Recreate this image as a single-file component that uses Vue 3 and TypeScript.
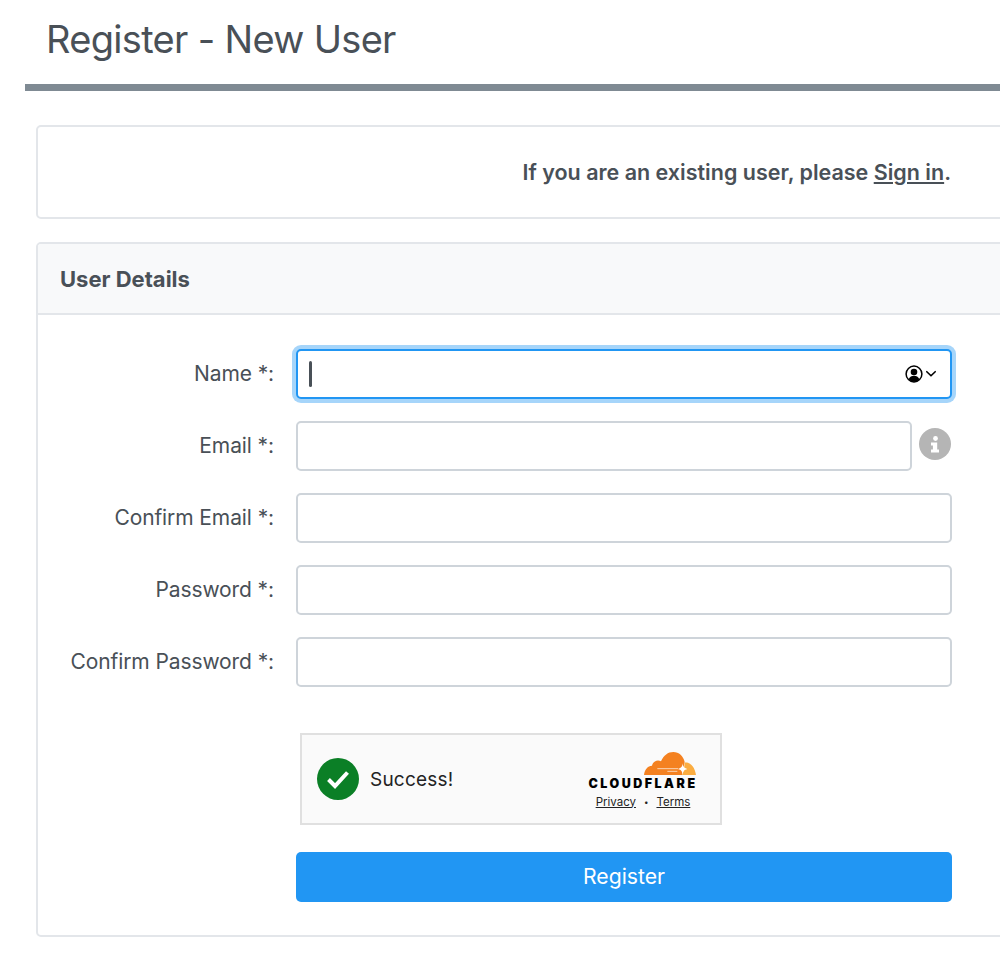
<template>
  <div class="page">
    <header class="page-header">
      <h1>Register - New User</h1>
    </header>

    <section class="card notice">
      <p>If you are an existing user, please <a href="#">Sign in</a>.</p>
    </section>

    <section class="card details">
      <div class="card-header">User Details</div>
      <form class="card-body" @submit.prevent>
        <div v-for="field in fields" :key="field.id" class="form-row">
          <label :for="field.id">{{ field.label }}</label>
          <div class="input-wrap" :class="{ focused: field.focused }">
            <div class="input-box">
              <span v-if="field.focused" class="caret"></span>
              <span v-if="field.focused" class="autofill">
                <svg width="20" height="20" viewBox="0 0 20 20">
                  <circle cx="10" cy="10" r="7.9" fill="none" stroke="#000" stroke-width="1.5" />
                  <circle cx="10" cy="8" r="3.3" fill="#000" />
                  <path d="M4.6 15.200c1-2.500 3.100-3.500 5.400-3.500s4.400 1 5.400 3.500c-1.400 1.600-3.300 2.500-5.400 2.500s-4-.9-5.400-2.500z" fill="#000" />
                </svg>
                <svg width="12" height="8" viewBox="0 0 12 8">
                  <path d="M1.800 1.700 6 5.800l4.200-4.100" fill="none" stroke="#000" stroke-width="1.600" stroke-linecap="round" stroke-linejoin="round" />
                </svg>
              </span>
            </div>
            <span v-if="field.info" class="info-icon">
              <svg width="14" height="20" viewBox="0 0 14 20">
                <circle cx="7.500" cy="4.500" r="2.400" fill="#fff" />
                <path d="M3 8.500h6.200v7H11v3H3v-3h1.900v-4H3z" fill="#fff" />
              </svg>
            </span>
          </div>
        </div>

        <div class="captcha-row">
          <div class="captcha">
            <span class="captcha-check">
              <svg width="42" height="42" viewBox="0 0 42 42">
                <circle cx="21" cy="21" r="21" fill="#0b7f26" />
                <path d="M11.500 21.500l6.500 6.500L30.500 14.500" fill="none" stroke="#fff" stroke-width="4" />
              </svg>
            </span>
            <span class="captcha-text">Success!</span>
            <div class="captcha-brand">
              <svg class="cloud" width="52" height="23" viewBox="0 0 156 69">
                <path d="M0 69C2 52 11 42 24 41 27 28 40 22 51 28 59 10 72 0 88 0c17 0 30 12 34 30l-8 39z" fill="#f48120" />
                <path d="M122 32c19-2 31 16 34 37h-42c5-11 7-24 8-37z" fill="#fbad41" />
                <path d="M40 50h62M70 58h30" stroke="#fff" stroke-width="2" fill="none" />
                <path d="M116 34c1 10 4 14 14 17-10 3-13 7-14 17-1-10-4-14-14-17 10-3 13-7 14-17z" fill="#fff" />
              </svg>
              <div class="wordmark">CLOUDFLARE</div>
              <div class="captcha-links"><a href="#">Privacy</a><span>•</span><a href="#">Terms</a></div>
            </div>
          </div>
        </div>

        <div class="submit-row">
          <button type="submit">Register</button>
        </div>
      </form>
    </section>
  </div>
</template>

<script setup lang="ts">
interface Field {
  id: string;
  label: string;
  focused?: boolean;
  info?: boolean;
}

const fields: Field[] = [
  { id: 'name', label: 'Name *:', focused: true },
  { id: 'email', label: 'Email *:', info: true },
  { id: 'confirm-email', label: 'Confirm Email *:' },
  { id: 'password', label: 'Password *:' },
  { id: 'confirm-password', label: 'Confirm Password *:' },
];
</script>

<style>
html,
body {
  background: #fff;
  overflow: hidden;
}
</style>

<style scoped>
.page {
  width: 1000px;
  height: 960px;
  overflow: hidden;
  box-sizing: border-box;
  padding-left: 25px;
  font-family: Inter, "Liberation Sans", sans-serif;
  color: #495057;
}

.page-header {
  height: 84px;
  border-bottom: 7px solid #7f8a93;
  padding-left: 21px;
  box-sizing: content-box;
}

.page-header h1 {
  margin: 0;
  padding-top: 15px;
  font-size: 38px;
  line-height: 48px;
  font-weight: 400;
  letter-spacing: -0.68px;
}

.card {
  margin-left: 11px;
  width: 1000px;
  box-sizing: border-box;
  border: 2px solid #e3e6ea;
  border-radius: 5px;
  background: #fff;
}

.notice {
  margin-top: 34px;
  height: 94px;
  padding-right: 83px;
  display: flex;
  align-items: center;
  justify-content: flex-end;
  font-size: 21.500px;
  font-weight: 600;
}

.notice p {
  margin: 0;
}

.notice a {
  color: inherit;
}

.details {
  margin-top: 23px;
  height: 695px;
}

.card-header {
  height: 71px;
  box-sizing: border-box;
  padding-left: 22px;
  display: flex;
  align-items: center;
  background: #f8f9fa;
  border-bottom: 2px solid #e3e6ea;
  border-radius: 3px 3px 0 0;
  font-size: 22px;
  font-weight: 700;
}

.card-body {
  padding-top: 34px;
}

.form-row {
  display: flex;
  align-items: center;
  height: 50px;
  margin-bottom: 22px;
}

.form-row label {
  width: 236px;
  flex: none;
  margin-bottom: 2px;
  text-align: right;
  font-size: 21px;
  letter-spacing: -0.1px;
}

.input-wrap {
  margin-left: 22px;
  width: 656px;
  display: flex;
  align-items: center;
  gap: 7px;
}

.input-box {
  flex: 1;
  height: 50px;
  box-sizing: border-box;
  border: 2px solid #ced4da;
  border-radius: 5px;
  display: flex;
  align-items: center;
  padding: 0 13px 0 11px;
  background: #fff;
}

.focused .input-box {
  border-color: #2196f3;
  box-shadow: 0 0 0 4px #a6d5fa;
}

.caret {
  width: 3px;
  height: 26px;
  background: #495057;
  border-radius: 2px;
}

.autofill {
  margin-left: auto;
  display: flex;
  align-items: center;
  gap: 1px;
}

.info-icon {
  width: 32px;
  height: 32px;
  flex: none;
  margin: 0 1px 4px 0;
  border-radius: 50%;
  background: #b5b5b5;
  display: flex;
  align-items: center;
  justify-content: center;
}

.captcha-row {
  margin-top: 46px;
  padding-left: 262px;
}

.captcha {
  width: 422px;
  height: 92px;
  box-sizing: border-box;
  border: 2px solid #e0e0e0;
  background: #fafafa;
  display: flex;
  align-items: center;
  padding: 0 11px 0 15px;
  color: #232323;
}

.captcha-check {
  display: flex;
  flex: none;
}

.captcha-text {
  margin-left: 11px;
  font-size: 19px;
  letter-spacing: 0.2px;
}

.captcha-brand {
  margin-left: auto;
  width: 132px;
  padding-top: 2px;
  display: flex;
  flex-direction: column;
  align-items: center;
}

.cloud {
  align-self: flex-end;
  margin-right: 13px;
}

.wordmark {
  font-size: 12.500px;
  line-height: 14px;
  font-weight: 900;
  letter-spacing: 2.500px;
  color: #000;
  margin-top: 2px;
}

.captcha-links {
  display: flex;
  gap: 8px;
  margin-top: 4px;
  font-size: 11.500px;
  line-height: 14px;
  color: #232323;
}

.captcha-links span {
  font-size: 8px;
}

.captcha-links a {
  color: inherit;
}

.submit-row {
  margin-top: 27px;
  padding-left: 258px;
}

button {
  display: block;
  width: 656px;
  height: 50px;
  padding: 0 0 2px;
  border: 0;
  border-radius: 5px;
  background: #2196f3;
  color: #fff;
  font-family: inherit;
  font-size: 21.200px;
  font-weight: 400;
}
</style>
